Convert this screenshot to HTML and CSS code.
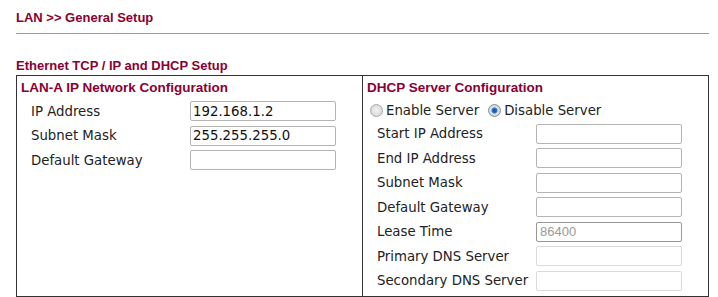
FILE: index.html
```html
<!DOCTYPE html>
<html lang="en">

<head>
  <meta charset="UTF-8" />
  <title>LAN General Setup</title>
  <link rel="stylesheet" href="styles.css">
</head>

<body>
  <div class="page">
    <h1 class="page-title">LAN &gt;&gt; General Setup</h1>

    <h2 class="section-title">Ethernet TCP / IP and DHCP Setup</h2>
    <div class="setup-box">
      <div class="panel panel-left">
        <div class="panel-title">LAN-A IP Network Configuration</div>
        <div class="field">
          <label>IP Address</label>
          <input type="text" value="192.168.1.2">
        </div>
        <div class="field">
          <label>Subnet Mask</label>
          <input type="text" value="255.255.255.0">
        </div>
        <div class="field">
          <label>Default Gateway</label>
          <input type="text" value="">
        </div>
      </div>

      <div class="panel">
        <div class="panel-title">DHCP Server Configuration</div>
        <div class="radio-row">
          <label><input type="radio" name="dhcp"> Enable Server</label>
          <label><input type="radio" name="dhcp" checked> Disable Server</label>
        </div>
        <div class="field">
          <label>Start IP Address</label>
          <input type="text" value="">
        </div>
        <div class="field">
          <label>End IP Address</label>
          <input type="text" value="">
        </div>
        <div class="field">
          <label>Subnet Mask</label>
          <input type="text" value="">
        </div>
        <div class="field">
          <label>Default Gateway</label>
          <input type="text" value="">
        </div>
        <div class="field">
          <label>Lease Time</label>
          <input type="text" class="input-lease" value="86400" readonly>
        </div>
        <div class="field">
          <label>Primary DNS Server</label>
          <input type="text" class="input-off" value="" disabled>
        </div>
        <div class="field">
          <label>Secondary DNS Server</label>
          <input type="text" class="input-off" value="" disabled>
        </div>
      </div>
    </div>
  </div>
</body>

</html>
```

FILE: styles.css
```css
:root {
  --title: #8a0032;
  --text: #222;
  --frame: #333;
  --rule: #9c9c9c;
}

* {
  box-sizing: border-box;
}

body {
  margin: 0;
  background: #fff;
  color: var(--text);
  font-family: "DejaVu Sans", Verdana, sans-serif;
  font-size: 13.3px;
}

.page {
  padding: 0 9px 0 16px;
}

.page-title,
.section-title,
.panel-title {
  font-family: "Liberation Sans", Arial, sans-serif;
  font-weight: bold;
  font-size: 13px;
  color: var(--title);
  margin: 0;
}

.page-title {
  line-height: 16px;
  padding-top: 10px;
  padding-bottom: 7px;
  border-bottom: 1px solid var(--rule);
}

.section-title {
  line-height: 16px;
  margin-top: 24px;
  margin-bottom: 1px;
}

.setup-box {
  display: grid;
  grid-template-columns: 346px 1fr;
  border: 1px solid var(--frame);
}

.panel {
  padding-bottom: 3px;
}

.panel-left {
  border-right: 1px solid var(--frame);
}

.panel-title {
  height: 23px;
  line-height: 24px;
  padding-left: 4px;
  font-size: 13.5px;
}

.field {
  display: grid;
  grid-template-columns: 159px 146px;
  align-items: center;
  height: 24.5px;
  padding-left: 14px;
}

.field input {
  width: 146px;
  height: 20px;
  margin: 0;
  padding: 0 2px;
  border: 1px solid #b4b4b4;
  border-radius: 2px;
  background: #fff;
  color: #111;
  font-family: "DejaVu Sans", Verdana, sans-serif;
  font-size: 13.3px;
  outline: none;
}

.field .input-lease {
  border-color: #979797;
  color: #9a9a9a;
  font-family: "Liberation Sans", Arial, sans-serif;
  font-size: 13px;
  padding-left: 3px;
}

.field .input-off {
  border-color: #dadada;
}

.radio-row {
  display: flex;
  align-items: center;
  height: 22.5px;
  padding-left: 7px;
  padding-top: 1px;
  gap: 9px;
}

.radio-row label {
  display: flex;
  align-items: center;
  gap: 3px;
}

.radio-row input {
  appearance: none;
  width: 13px;
  height: 13px;
  margin: 0;
  border: 1px solid #a8a8a8;
  border-radius: 50%;
  background: radial-gradient(circle, #f2f2f2 0, #dcdcdc 70%);
}

.radio-row input:checked {
  border-color: #8a8a8a;
  background: radial-gradient(circle, #0e4f9c 0, #2f78c8 2.5px, #d8e2ec 3.5px, #d6d6d6 70%);
}
```
